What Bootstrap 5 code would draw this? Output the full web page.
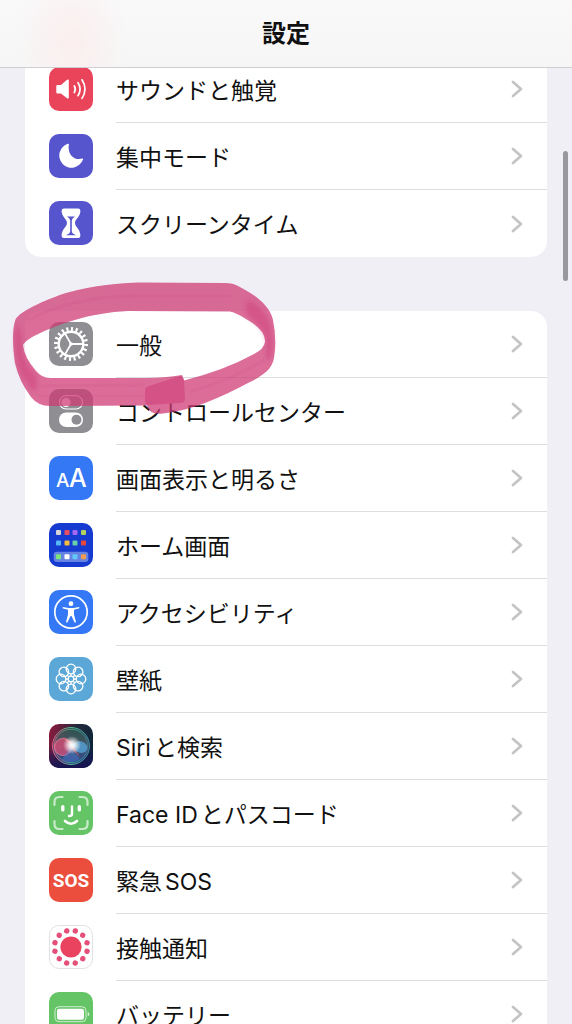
<!DOCTYPE html>
<html lang="ja">
<head>
<meta charset="utf-8">
<meta name="viewport" content="width=device-width, initial-scale=1">
<title>設定</title>
<link href="https://cdn.jsdelivr.net/npm/bootstrap@5.3.0/dist/css/bootstrap.min.css" rel="stylesheet">
<style>
  body { background: #f0eff5; color: #111; font-family: Inter, "Noto Sans CJK JP", sans-serif; }
  .title-bar { height: 68px; background: radial-gradient(ellipse 56px 80px at 72px 44px, #fbeeee 0, #fbeeee00 100%), linear-gradient(#f9f9fa, #f6f6f6); border-bottom: 1px solid #cfced2; z-index: 2; }
  .title-bar h1 { font-size: 24px; line-height: 32px; font-weight: 700; }
  .scroll-area { padding: 0 25px; }
  .first-group { margin-top: -12px; margin-bottom: 54px; }
  .settings-group { --bs-list-group-border-radius: 16px; background: #fff; border-radius: 16px; }
  .settings-row { height: 67px; padding: 0 0 0 24px; gap: 23px; font-size: 23px; line-height: 32px; background: none; color: #111; }
  .row-body { border-bottom: 1px solid #dedee0; padding-right: 24px; }
  .row-label { padding-top: 3px; }
  .latin-before { margin-right: 3px; }
  .latin-after { margin-left: 3px; }
  .settings-row:last-child .row-body { border-bottom: 0; }
  .app-icon { width: 44px; height: 44px; margin-bottom: 2px; border-radius: 10px; flex: none; overflow: hidden; }
  .chevron { width: 12px; height: 20px; fill: none; stroke: #c4c4c6; stroke-width: 2.7; stroke-linecap: round; stroke-linejoin: round; }
  .ic-red { background: #ea445a; } .ic-indigo { background: #5755cd; } .ic-gray { background: #8e8e93; }
  .ic-blue { background: #3478f6; } .ic-navy { background: #163bd0; } .ic-sky { background: #5aa7d8; }
  .ic-green { background: #65c466; } .ic-sos { background: #eb4e3d; } .ic-white { background: #fff; border: 1px solid #e2e2e4; }
  .aa-text { font-family: Inter, sans-serif; font-weight: 500; fill: #fff; }
  .sos-text { font-family: Roboto, sans-serif; font-weight: 700; fill: #fff; }
  .scroll-thumb { width: 5px; height: 130px; top: 83px; right: 4px; border-radius: 3px; background: #99989d; }
  .marker-ring { left: -15px; top: -31px; width: 270px; height: 136px; z-index: 3; pointer-events: none; }
</style>
</head>
<body>
<svg width="0" height="0" class="position-absolute" aria-hidden="true">
  <symbol id="chev" viewBox="0 0 12 20"><path d="M2 3l8 7-8 7"/></symbol>
</svg>
<div class="vh-100 d-flex flex-column overflow-hidden">
  <header class="title-bar d-flex align-items-center justify-content-center flex-shrink-0 position-relative">
    <h1 class="m-0">設定</h1>
  </header>
  <main class="scroll-area flex-grow-1 position-relative">
    <nav class="list-group list-group-flush settings-group first-group" aria-label="通知と集中">
      <a href="#sound" class="list-group-item border-0 settings-row d-flex align-items-center">
        <svg class="app-icon ic-red" viewBox="0 0 44 44"><path d="M8.500 18H12l6-5.200q1.800-1 1.800.8v16.800q0 1.800-1.800.8L12 26.500H8.500Q7.300 26.500 7.300 25.300V19.200Q7.300 18 8.500 18z" fill="#fff"/><path d="M25.300 19q2 3.300 0 6.500M29 15.700q4.200 6.500 0 13M33 12.800q6 9.300 0 18.600" fill="none" stroke="#fff" stroke-width="1.700" stroke-linecap="round"/></svg>
        <span class="row-body d-flex align-items-center justify-content-between flex-grow-1 h-100"><span class="row-label">サウンドと触覚</span><svg class="chevron"><use href="#chev"/></svg></span>
      </a>
      <a href="#focus" class="list-group-item border-0 settings-row d-flex align-items-center">
        <svg class="app-icon ic-indigo" viewBox="0 0 44 44"><path d="M19 9.800q1-.5.900.6c-1.700 8.500 4 16.500 13.300 14.200q1.400-.2.800.9A12.200 12.200 0 1 1 19 9.800z" fill="#fff"/></svg>
        <span class="row-body d-flex align-items-center justify-content-between flex-grow-1 h-100"><span class="row-label">集中モード</span><svg class="chevron"><use href="#chev"/></svg></span>
      </a>
      <a href="#screentime" class="list-group-item border-0 settings-row d-flex align-items-center">
        <svg class="app-icon ic-indigo" viewBox="0 0 44 44"><path d="M15 7.500h14q2.400 0 2.400 2.300c0 6-5.400 8.500-5.400 12.200s5.400 6.200 5.400 12.700q0 2.300-2.400 2.300H15q-2.400 0-2.400-2.300C12.600 28.200 18 25.700 18 22s-5.400-6.200-5.400-12.200q0-2.300 2.400-2.300z" fill="#fff"/><path d="M18 15.500h8q-3.200 1.800-3.200 4v10.700q0 2.300 4.200 4H17q4.200-1.700 4.200-4V19.500q0-2.200-3.200-4z" fill="#5755cd"/></svg>
        <span class="row-body d-flex align-items-center justify-content-between flex-grow-1 h-100"><span class="row-label">スクリーンタイム</span><svg class="chevron"><use href="#chev"/></svg></span>
      </a>
    </nav>

    <nav class="list-group list-group-flush settings-group position-relative" aria-label="一般設定">
      <a href="#general" class="list-group-item border-0 settings-row d-flex align-items-center">
        <svg class="app-icon ic-gray" viewBox="0 0 44 44"><g fill="none" stroke="#fff"><circle cx="22" cy="22" r="12.300" stroke-width="2.400"/><circle cx="22" cy="22" r="15" stroke-width="4" pathLength="220" stroke-dasharray="4.800 6.200"/><path d="M22 22h12M22 22l-6-10.400M22 22l-6 10.400" stroke-width="1.800"/></g><circle cx="22" cy="22" r="1.800" fill="#fff"/></svg>
        <span class="row-body d-flex align-items-center justify-content-between flex-grow-1 h-100"><span class="row-label">一般</span><svg class="chevron"><use href="#chev"/></svg></span>
      </a>
      <a href="#control" class="list-group-item border-0 settings-row d-flex align-items-center">
        <svg class="app-icon ic-gray" viewBox="0 0 44 44"><rect x="10.500" y="6.700" width="23" height="13.300" rx="6.600" fill="none" stroke="#fff" stroke-width="1.200"/><circle cx="17" cy="13.400" r="4.600" fill="#fff"/><rect x="10" y="23.500" width="24" height="14.500" rx="7.200" fill="#fff"/><circle cx="27.500" cy="30.700" r="5" fill="#8e8e93"/></svg>
        <span class="row-body d-flex align-items-center justify-content-between flex-grow-1 h-100"><span class="row-label">コントロールセンター</span><svg class="chevron"><use href="#chev"/></svg></span>
      </a>
      <a href="#display" class="list-group-item border-0 settings-row d-flex align-items-center">
        <svg class="app-icon ic-blue" viewBox="0 0 44 44"><text class="aa-text" x="7" y="31" font-size="19">A</text><text class="aa-text" x="20" y="31" font-size="25">A</text></svg>
        <span class="row-body d-flex align-items-center justify-content-between flex-grow-1 h-100"><span class="row-label">画面表示と明るさ</span><svg class="chevron"><use href="#chev"/></svg></span>
      </a>
      <a href="#home" class="list-group-item border-0 settings-row d-flex align-items-center">
        <svg class="app-icon ic-navy" viewBox="0 0 44 44"><rect x="4.700" y="28.700" width="34.600" height="10.300" rx="3" fill="#6583e2"/><g><rect x="7" y="7" width="5" height="5" rx="1" fill="#d5d5d8"/><rect x="15.500" y="7" width="5" height="5" rx="1" fill="#ea4f61"/><rect x="23.500" y="7" width="5" height="5" rx="1" fill="#a668f2"/><rect x="32" y="7" width="5" height="5" rx="1" fill="#b5d05c"/><rect x="7" y="17.500" width="5" height="5" rx="1" fill="#55b7f5"/><rect x="15.500" y="17.500" width="5" height="5" rx="1" fill="#f5bd3e"/><rect x="23.500" y="17.500" width="5" height="5" rx="1" fill="#68cfaa"/><rect x="32" y="17.500" width="5" height="5" rx="1" fill="#e8483b"/><rect x="7" y="31.300" width="5" height="5" rx="1" fill="#7de577"/><rect x="15.500" y="31.300" width="5" height="5" rx="1" fill="#fff"/><rect x="23.500" y="31.300" width="5" height="5" rx="1" fill="#62c8f7"/><rect x="32" y="31.300" width="5" height="5" rx="1" fill="#f29b50"/></g></svg>
        <span class="row-body d-flex align-items-center justify-content-between flex-grow-1 h-100"><span class="row-label">ホーム画面</span><svg class="chevron"><use href="#chev"/></svg></span>
      </a>
      <a href="#access" class="list-group-item border-0 settings-row d-flex align-items-center">
        <svg class="app-icon ic-blue" viewBox="0 0 44 44"><circle cx="22" cy="22" r="16.200" fill="none" stroke="#fff" stroke-width="1.700"/><circle cx="22" cy="13.700" r="2.400" fill="#fff"/><path d="M14 17l5.500 1h5l5.500-1q1 .9 0 1.500l-5 1.200v4.800l2 7.500q-.8 1-1.700 0L22.500 26h-1l-2.800 6q-.9 1-1.700 0l2-7.500v-4.800l-5-1.200q-1-.6 0-1.500z" fill="#fff"/></svg>
        <span class="row-body d-flex align-items-center justify-content-between flex-grow-1 h-100"><span class="row-label">アクセシビリティ</span><svg class="chevron"><use href="#chev"/></svg></span>
      </a>
      <a href="#wallpaper" class="list-group-item border-0 settings-row d-flex align-items-center">
        <svg class="app-icon ic-sky" viewBox="0 0 44 44"><g fill="none" stroke="#fff" stroke-width="1.300"><circle cx="22" cy="12" r="4.800"/><circle cx="29.100" cy="14.900" r="4.800"/><circle cx="32" cy="22" r="4.800"/><circle cx="29.100" cy="29.100" r="4.800"/><circle cx="22" cy="32" r="4.800"/><circle cx="14.900" cy="29.100" r="4.800"/><circle cx="12" cy="22" r="4.800"/><circle cx="14.900" cy="14.900" r="4.800"/><circle cx="22" cy="22" r="2.800"/><path d="M22 17v2.200M22 24.800V27M17 22h2.200M24.800 22H27M18.500 18.500l1.500 1.500M24 24l1.500 1.500M18.500 25.500L20 24M24 20l1.500-1.500"/></g></svg>
        <span class="row-body d-flex align-items-center justify-content-between flex-grow-1 h-100"><span class="row-label">壁紙</span><svg class="chevron"><use href="#chev"/></svg></span>
      </a>
      <a href="#siri" class="list-group-item border-0 settings-row d-flex align-items-center">
        <svg class="app-icon" viewBox="0 0 44 44"><defs><linearGradient id="siriBg" x1="0" y1=".3" x2="1" y2=".6"><stop offset="0" stop-color="#861b3e"/><stop offset=".5" stop-color="#24283b"/><stop offset="1" stop-color="#0c2638"/></linearGradient><linearGradient id="siriLow" x1="0" y1="0" x2="0" y2="1"><stop offset=".5" stop-color="#1b1464" stop-opacity="0"/><stop offset="1" stop-color="#171452"/></linearGradient><linearGradient id="siriRim"><stop offset="0" stop-color="#e55a86"/><stop offset=".5" stop-color="#51b993"/><stop offset="1" stop-color="#3b8aa8"/></linearGradient><linearGradient id="siriOrb" x1="0" y1="0" x2="0" y2="1"><stop offset="0" stop-color="#2a6454"/><stop offset=".5" stop-color="#5d6877"/><stop offset="1" stop-color="#2a58a6"/></linearGradient><radialGradient id="siriGlow"><stop offset="0" stop-color="#fff"/><stop offset=".35" stop-color="#fff" stop-opacity=".8"/><stop offset="1" stop-color="#fff" stop-opacity="0"/></radialGradient></defs><path fill="url(#siriBg)" d="M0 0h44v44H0z"/><path fill="url(#siriLow)" d="M0 0h44v44H0z"/><circle cx="22" cy="22" r="18.500" fill="url(#siriOrb)" fill-opacity=".7" stroke="url(#siriRim)" stroke-width="1"/><circle cx="22" cy="22" r="16.700" fill="none" stroke="url(#siriRim)" stroke-width=".7"/><circle cx="14" cy="23" r="8.500" fill="#ed4b79" fill-opacity=".65" stroke="#f797ae" stroke-width=".6"/><path d="M22 23C28 13 37 18 38 22q1 6-5 7-5 0-11-6z" fill="#56a8df" fill-opacity=".75"/><path d="M21 22l-8 14q10 5 18-1z" fill="#5284dd" fill-opacity=".4"/><path d="M24 22l7 11-9-9zM21 21l-7-8 10 5z" fill="#f46b75" fill-opacity=".65"/><circle cx="23" cy="21" r="9" fill="url(#siriGlow)"/></svg>
        <span class="row-body d-flex align-items-center justify-content-between flex-grow-1 h-100"><span class="row-label"><span class="latin-before">Siri</span>と検索</span><svg class="chevron"><use href="#chev"/></svg></span>
      </a>
      <a href="#faceid" class="list-group-item border-0 settings-row d-flex align-items-center">
        <svg class="app-icon ic-green" viewBox="0 0 44 44"><g fill="none" stroke="#fff" stroke-linecap="round"><path d="M5.500 14v-3q0-5 5-5h3M30.500 6h3q5 0 5 5v3M38.500 30v3q0 5-5 5h-3M13.500 38h-3q-5 0-5-5v-3" stroke-width="2.200" opacity=".65"/><path d="M13.800 15.700v3.200M30.300 15.700v3.200" stroke-width="3.400"/><path d="M23 15.500v7.500q0 2-3 2" stroke-width="2.400"/><path d="M16 30q6 5.500 12 0" stroke-width="2.600"/></g></svg>
        <span class="row-body d-flex align-items-center justify-content-between flex-grow-1 h-100"><span class="row-label"><span class="latin-before">Face ID</span>とパスコード</span><svg class="chevron"><use href="#chev"/></svg></span>
      </a>
      <a href="#sos" class="list-group-item border-0 settings-row d-flex align-items-center">
        <svg class="app-icon ic-sos" viewBox="0 0 44 44"><text class="sos-text" x="22" y="29" font-size="19" text-anchor="middle">SOS</text></svg>
        <span class="row-body d-flex align-items-center justify-content-between flex-grow-1 h-100"><span class="row-label">緊急<span class="latin-after">SOS</span></span><svg class="chevron"><use href="#chev"/></svg></span>
      </a>
      <a href="#exposure" class="list-group-item border-0 settings-row d-flex align-items-center">
        <svg class="app-icon ic-white" viewBox="1 1 42 42"><circle cx="22" cy="22" r="10.600" fill="#ea4360"/><circle cx="22" cy="22" r="16.600" fill="none" stroke="#e4507a" stroke-width="5.400" stroke-linecap="round" pathLength="120" stroke-dasharray="0 10" transform="rotate(15 22 22)"/></svg>
        <span class="row-body d-flex align-items-center justify-content-between flex-grow-1 h-100"><span class="row-label">接触通知</span><svg class="chevron"><use href="#chev"/></svg></span>
      </a>
      <a href="#battery" class="list-group-item border-0 settings-row d-flex align-items-center">
        <svg class="app-icon ic-green" viewBox="0 0 44 44"><rect x="6" y="14.700" width="31" height="15" rx="4" fill="none" stroke="#fff" stroke-opacity=".7"/><rect x="8" y="16.700" width="27" height="11" rx="2.300" fill="#fff"/><path d="M38.700 20q1.600.6 1.600 2.200t-1.600 2.200z" fill="#fff" fill-opacity=".75"/></svg>
        <span class="row-body d-flex align-items-center justify-content-between flex-grow-1 h-100"><span class="row-label">バッテリー</span><svg class="chevron"><use href="#chev"/></svg></span>
      </a>

      <svg class="marker-ring position-absolute" viewBox="10 280 270 136" aria-hidden="true">
        <defs><filter id="soft"><feGaussianBlur stdDeviation=".6"/></filter><filter id="softer" x="-50%" y="-20%" width="200%" height="140%"><feGaussianBlur stdDeviation="2.200"/></filter></defs>
        <g fill="#ce3974">
          <path filter="url(#soft)" fill-opacity=".74" fill-rule="evenodd" d="M15 321C17 312 45 300 66 293C95 285 120 283 140 282.500L225 283Q233 283 238 286C256 295 270 306 273 320Q277 340 274 358C272 370 262 376 248 383C220 398 190 411 163 413.500Q149 415 147 405.500L50 406Q38 406 31 397Q19 381 15 363Q11 335 15 321zM23 345Q25 341 34 336C60 323 90 313 128 311L230 311.500Q237 313 246 319Q266 330 265 342Q264 349 254 354Q225 370 184 380.500L182 375Q165 378 146 378H50Q42 378 36 371Q24 357 23 345z"/>
          <path filter="url(#softer)" fill-opacity=".42" d="M17 323Q13 338 17 362Q22 380 34 392Q40 388 36 375Q21 360 22 343Q21 328 17 323z"/>
          <path filter="url(#softer)" fill-opacity=".42" d="M248 300Q264 308 270 322Q275 340 271 357Q269 361 266 360V340Q264 329 250 318Q242 310 248 300z"/>
          <path filter="url(#soft)" fill-opacity=".5" d="M145 390Q145 387 149 386L180 376Q183 376 184 380L185 400Q184 403 180 403L149 405Q145 405 145 401z"/>
          <path filter="url(#soft)" fill="none" stroke="#ce3974" stroke-opacity=".1" stroke-width="3" d="M28 320Q75 296 135 296H230M40 386L145 385M38 396L145 396M190 392Q230 380 264 360"/>
        </g>
      </svg>
    </nav>
    <div class="scroll-thumb position-absolute"></div>
  </main>
</div>
</body>
</html>
